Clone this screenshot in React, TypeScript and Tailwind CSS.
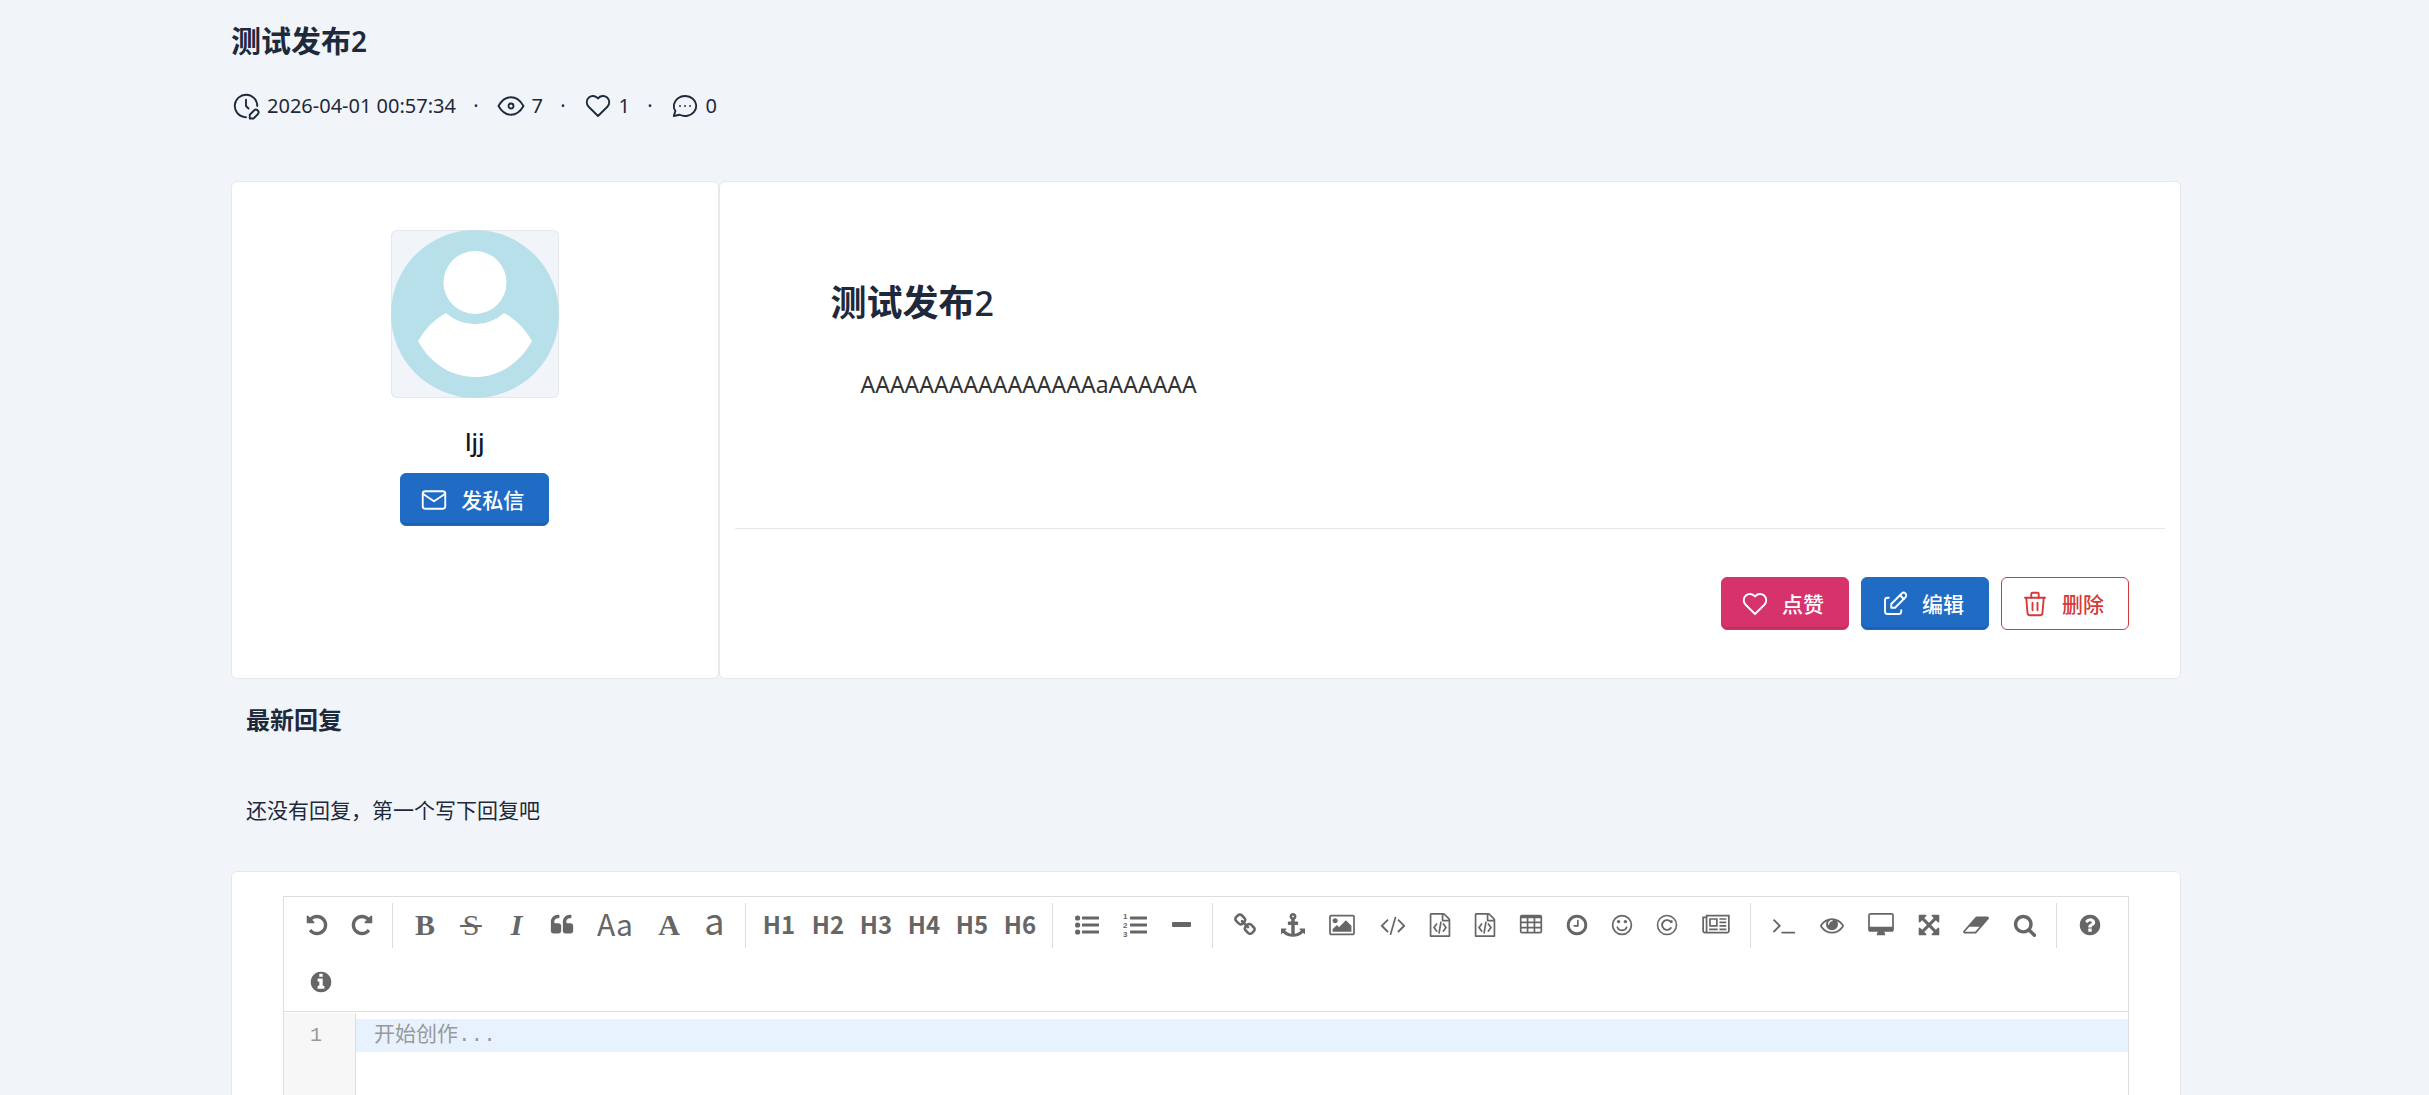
import type { ReactNode } from 'react'
import clsx from 'clsx'

const ICONS = {
  undo: 'M1664 896q0 156-61 298t-164 245-245 164-298 61q-172 0-327-72.5t-264-204.5q-7-10-6.5-22.5t8.5-20.5l137-138q10-9 25-9 16 2 23 12 73 95 179 147t225 52q104 0 198.5-40.5t163.5-109.5 109.5-163.5 40.5-198.5-40.5-198.5-109.5-163.5-163.5-109.5-198.5-40.5q-98 0-188 35.5t-160 101.5l137 138q31 30 14 69-17 40-59 40h-448q-26 0-45-19t-19-45v-448q0-42 40-59 39-17 69 14l130 129q107-101 244.5-156.5t284.5-55.5q156 0 298 61t245 164 164 245 61 298z',
  redo: 'M1664 256v448q0 26-19 45t-45 19h-448q-42 0-59-40-17-39 14-69l138-138q-148-137-349-137-104 0-198.5 40.5t-163.5 109.5-109.5 163.5-40.5 198.5 40.5 198.5 109.5 163.5 163.5 109.5 198.5 40.5q119 0 225-52t179-147q7-10 23-12 15 0 25 9l137 138q9 8 9.5 20.5t-7.5 22.5q-109 132-264 204.5t-327 72.5q-156 0-298-61t-245-164-164-245-61-298 61-298 164-245 245-164 298-61q147 0 284.5 55.5t244.5 156.5l130-129q29-31 70-14 39 17 39 59z',
  quote: 'M832 960v384q0 80-56 136t-136 56h-384q-80 0-136-56t-56-136v-704q0-104 40.5-198.5t109.5-163.5 163.5-109.5 198.5-40.5h64q26 0 45 19t19 45v128q0 26-19 45t-45 19h-64q-106 0-181 75t-75 181v32q0 40 28 68t68 28h224q80 0 136 56t56 136zm896 0v384q0 80-56 136t-136 56h-384q-80 0-136-56t-56-136v-704q0-104 40.5-198.5t109.5-163.5 163.5-109.5 198.5-40.5h64q26 0 45 19t19 45v128q0 26-19 45t-45 19h-64q-106 0-181 75t-75 181v32q0 40 28 68t68 28h224q80 0 136 56t56 136z',
  link: 'M1520 1216q0-40-28-68l-208-208q-28-28-68-28-42 0-72 32 3 3 19 18.5t21.5 21.5 15 19 13 25.5 3.5 27.5q0 40-28 68t-68 28q-15 0-27.5-3.5t-25.5-13-19-15-21.5-21.5-18.5-19q-33 31-33 73 0 40 28 68l206 207q27 27 68 27 40 0 68-26l147-146q28-28 28-67zm-703-705q0-40-28-68l-206-207q-28-28-68-28-39 0-68 27l-147 146q-28 28-28 67 0 40 28 68l208 208q27 27 68 27 42 0 72-31-3-3-19-18.5t-21.5-21.5-15-19-13-25.5-3.5-27.5q0-40 28-68t68-28q15 0 27.5 3.5t25.5 13 19 15 21.5 21.5 18.5 19q33-31 33-73zm895 705q0 120-85 203l-147 146q-83 83-203 83-121 0-204-85l-206-207q-83-83-83-203 0-123 88-209l-88-88q-86 88-208 88-120 0-204-84l-208-208q-84-84-84-204t85-203l147-146q83-83 203-83 121 0 204 85l206 207q83 83 83 203 0 123-88 209l88 88q86-88 208-88 120 0 204 84l208 208q84 84 84 204z',
  anchor: 'M960 256q0-26-19-45t-45-19-45 19-19 45 19 45 45 19 45-19 19-45zm832 928v352q0 22-20 30-8 2-12 2-13 0-23-9l-93-93q-119 143-318.5 226.5t-429.5 83.5-429.5-83.5-318.5-226.5l-93 93q-9 9-23 9-4 0-12-2-20-8-20-30v-352q0-14 9-23t23-9h352q22 0 30 20 8 19-7 35l-100 100q67 91 189.5 153.5t271.5 82.5v-647h-192q-26 0-45-19t-19-45v-128q0-26 19-45t45-19h192v-163q-58-34-93-92.5t-35-128.5q0-106 75-181t181-75 181 75 75 181q0 70-35 128.5t-93 92.5v163h192q26 0 45 19t19 45v128q0 26-19 45t-45 19h-192v647q149-20 271.5-82.5t189.5-153.5l-100-100q-15-16-7-35 8-20 30-20h352q14 0 23 9t9 23z',
  picture: 'M576 576q0 80-56 136t-136 56-136-56-56-136 56-136 136-56 136 56 56 136zm1024 384v448h-1408v-192l320-320 160 160 512-512zm96-704h-1600q-13 0-22.5 9.5t-9.5 22.5v1216q0 13 9.5 22.5t22.5 9.5h1600q13 0 22.5-9.5t9.5-22.5v-1216q0-13-9.5-22.5t-22.5-9.5zm160 32v1216q0 66-47 113t-113 47h-1600q-66 0-113-47t-47-113v-1216q0-66 47-113t113-47h1600q66 0 113 47t47 113z',
  code: 'M553 1399l-50 50q-10 10-23 10t-23-10l-466-466q-10-10-10-23t10-23l466-466q10-10 23-10t23 10l50 50q10 10 10 23t-10 23l-393 393 393 393q10 10 10 23t-10 23zm591-1067l-373 1291q-4 13-15.5 19.5t-23.5 2.5l-62-17q-13-4-19.5-15.5t-2.5-24.5l373-1291q4-13 15.5-19.5t23.5-2.5l62 17q13 4 19.5 15.5t2.5 24.5zm657 651l-466 466q-10 10-23 10t-23-10l-50-50q-10-10-10-23t10-23l393-393-393-393q-10-10-10-23t10-23l50-50q10-10 23-10t23 10l466 466q10 10 10 23t-10 23z',
  fileCode: 'M1596 380q28 28 48 76t20 88v1152q0 40-28 68t-68 28h-1344q-40 0-68-28t-28-68v-1600q0-40 28-68t68-28h896q40 0 88 20t76 48zm-444-244v376h376q-10-29-22-41l-313-313q-12-12-41-22zm384 1528v-1024h-416q-40 0-68-28t-28-68v-416h-768v1536h1280zm-928-896q8-11 21-12.5t24 6.5l51 38q11 8 12.5 21t-6.5 24l-182 243 182 243q8 11 6.5 24t-12.5 21l-51 38q-11 8-24 6.5t-21-12.5l-226-301q-14-19 0-38zm802 301q14 19 0 38l-226 301q-8 11-21 12.5t-24-6.5l-51-38q-11-8-12.5-21t6.5-24l182-243-182-243q-8-11-6.5-24t12.5-21l51-38q11-8 24-6.5t21 12.5zm-620 461q-13-2-20.5-13t-5.5-24l138-831q2-13 13-20.5t24-5.5l63 10q13 2 20.5 13t5.5 24l-138 831q-2 13-13 20.5t-24 5.5z',
  table: 'M224 128h1344q160 0 160 160v1088q0 160-160 160h-1344q-160 0-160-160v-1088q0-160 160-160zM192 384v256h384v-256zM704 384v256h384v-256zM1216 384v256h384v-256zM192 768v256h384v-256zM704 768v256h384v-256zM1216 768v256h384v-256zM192 1152v256h384v-256zM704 1152v256h384v-256zM1216 1152v256h384v-256z',
  clock: 'M1024 544v448q0 14-9 23t-23 9h-320q-14 0-23-9t-9-23v-64q0-14 9-23t23-9h224v-352q0-14 9-23t23-9h64q14 0 23 9t9 23zm416 352q0-148-73-273t-198-198-273-73-273 73-198 198-73 273 73 273 198 198 273 73 273-73 198-198 73-273zm224 0q0 209-103 385.5t-279.5 279.5-385.5 103-385.5-103-279.5-279.5-103-385.5 103-385.5 279.5-279.5 385.5-103 385.5 103 279.5 279.5 103 385.5z',
  news: 'M1024 512h-384v384h384v-384zm128 640v128h-640v-128h640zm0-768v640h-640v-640h640zm640 768v128h-512v-128h512zm0-256v128h-512v-128h512zm0-256v128h-512v-128h512zm0-256v128h-512v-128h512zm-1536 960v-960h-128v960q0 26 19 45t45 19 45-19 19-45zm1664 0v-1088h-1536v1088q0 33-11 64h1483q26 0 45-19t19-45zm128-1216v1216q0 80-56 136t-136 56h-1664q-80 0-136-56t-56-136v-1088h256v-128h1792z',
  terminal: 'M649 983l-466 466q-10 10-23 10t-23-10l-50-50q-10-10-10-23t10-23l393-393-393-393q-10-10-10-23t10-23l50-50q10-10 23-10t23 10l466 466q10 10 10 23t-10 23zm1079 457v64q0 14-9 23t-23 9h-960q-14 0-23-9t-9-23v-64q0-14 9-23t23-9h960q14 0 23 9t9 23z',
  eye: 'M1664 960q-152-236-381-353 61 104 61 225 0 185-131.5 316.5t-316.5 131.5-316.5-131.5-131.5-316.5q0-121 61-225-229 117-381 353 133 205 333.5 326.5t434.5 121.5 434.5-121.5 333.5-326.5zm-720-384q0-20-14-34t-34-14q-125 0-214.5 89.5t-89.5 214.5q0 20 14 34t34 14 34-14 14-34q0-86 61-147t147-61q20 0 34-14t14-34zm848 384q0 34-20 69-140 230-376.5 368.5t-499.5 138.5-499.5-139-376.5-368q-20-35-20-69t20-69q140-229 376.5-368t499.5-139 499.5 139 376.5 368q20 35 20 69z',
  desktop: 'M1728 992v-832q0-13-9.5-22.5t-22.5-9.5h-1600q-13 0-22.5 9.5t-9.5 22.5v832q0 13 9.5 22.5t22.5 9.5h1600q13 0 22.5-9.5t9.5-22.5zm128-832v1088q0 66-47 113t-113 47h-544q0 37 16 77.5t32 71 16 43.5q0 26-19 45t-45 19h-512q-26 0-45-19t-19-45q0-14 16-44t32-70 16-78h-544q-66 0-113-47t-47-113v-1088q0-66 47-113t113-47h1600q66 0 113 47t47 113z',
  arrows: 'M1411 541l-355 355 355 355 144-144q29-31 70-14 39 17 39 59v448q0 26-19 45t-45 19h-448q-42 0-59-40-17-39 14-69l144-144-355-355-355 355 144 144q31 30 14 69-17 40-59 40h-448q-26 0-45-19t-19-45v-448q0-42 40-59 39-17 69 14l144 144 355-355-355-355-144 144q-19 19-45 19-12 0-24-5-40-17-40-59v-448q0-26 19-45t45-19h448q42 0 59 40 17 39-14 69l-144 144 355 355 355-355-144-144q-31-30-14-69 17-40 59-40h448q26 0 45 19t19 45v448q0 42-39 59-13 5-25 5-26 0-45-19z',
  eraser: 'M832 1408l336-384h-768l-336 384h768zm1013-1077q15 34 9.5 71.5t-30.5 65.5l-896 1024q-38 44-96 44h-768q-38 0-69.5-20.5t-47.5-54.5q-15-34-9.5-71.5t30.5-65.5l896-1024q38-44 96-44h768q38 0 69.5 20.5t47.5 54.5z',
  search: 'M1216 832q0-185-131.5-316.5t-316.5-131.5-316.5 131.5-131.5 316.5 131.5 316.5 316.5 131.5 316.5-131.5 131.5-316.5zm512 832q0 52-38 90t-90 38q-54 0-90-38l-343-342q-179 124-399 124-143 0-273.5-55.5t-225-150-150-225-55.5-273.5 55.5-273.5 150-225 225-150 273.5-55.5 273.5 55.5 225 150 150 225 55.5 273.5q0 220-124 399l343 343q37 37 37 90z',
  question: 'M1024 1376v-192q0-14-9-23t-23-9h-192q-14 0-23 9t-9 23v192q0 14 9 23t23 9h192q14 0 23-9t9-23zm256-672q0-88-55.5-163t-138.5-116-170-41q-243 0-371 213-15 24 8 42l132 100q7 6 19 6 16 0 25-12 53-68 86-92 34-24 86-24 48 0 85.5 26t37.5 59q0 38-20 61t-68 45q-63 28-115.5 86.5t-52.5 125.5v36q0 14 9 23t23 9h192q14 0 23-9t9-23q0-19 21.5-49.5t54.5-49.5q32-18 49-28.5t46-35 44.5-48 28-60.5 12.5-81zm384 192q0 209-103 385.5t-279.5 279.5-385.5 103-385.5-103-279.5-279.5-103-385.5 103-385.5 279.5-279.5 385.5-103 385.5 103 279.5 279.5 103 385.5z',
  info: 'M1152 1376v-160q0-14-9-23t-23-9h-96v-512q0-14-9-23t-23-9h-320q-14 0-23 9t-9 23v160q0 14 9 23t23 9h96v320h-96q-14 0-23 9t-9 23v160q0 14 9 23t23 9h448q14 0 23-9t9-23zm-128-896v-160q0-14-9-23t-23-9h-192q-14 0-23 9t-9 23v160q0 14 9 23t23 9h192q14 0 23-9t9-23zm640 416q0 209-103 385.5t-279.5 279.5-385.5 103-385.5-103-279.5-279.5-103-385.5 103-385.5 279.5-279.5 385.5-103 385.5 103 279.5 279.5 103 385.5z',
}

function Glyph({ name, wide }: { name: keyof typeof ICONS; wide?: boolean }) {
  return (
    <svg
      viewBox={wide ? '-64 0 1920 1792' : '0 0 1792 1792'}
      className={wide ? 'h-6 w-[26px]' : 'size-6'}
      fill="currentColor"
      fillRule="evenodd"
    >
      <path d={ICONS[name]} />
    </svg>
  )
}

function ListIcon({ ordered }: { ordered?: boolean }) {
  return (
    <svg viewBox="0 0 24 24" className="size-6 overflow-visible" fill="currentColor">
      {[5, 12, 19].map((y, i) => (
        <g key={y}>
          <rect x="7" y={y - 1.5} width="17" height="3" rx="0.4" />
          {ordered ? (
            <text x="0" y={6 + i * 9} className="font-['Liberation_Sans'] text-[8px] font-bold">
              {i + 1}
            </text>
          ) : (
            <circle cx="2.6" cy={y} r="2.6" />
          )}
        </g>
      ))}
    </svg>
  )
}

function SmileIcon() {
  return (
    <svg viewBox="0 0 24 24" className="size-6" fill="none" stroke="currentColor" strokeWidth="1.7">
      <circle cx="12" cy="12" r="9.4" />
      <path d="M7.3 14.2c.8 2 2.5 3.2 4.7 3.2s3.9-1.2 4.7-3.2" strokeLinecap="round" />
      <circle cx="8.6" cy="8.6" r="1.7" fill="currentColor" stroke="none" />
      <circle cx="15.4" cy="8.6" r="1.7" fill="currentColor" stroke="none" />
    </svg>
  )
}

function CopyrightIcon() {
  return (
    <svg viewBox="0 0 24 24" className="size-6" fill="none" stroke="currentColor" strokeWidth="1.6">
      <circle cx="12" cy="12" r="9.5" />
      <path d="M16.300 9.600a4.900 4.900 0 1 0 0 4.800M16.600 7.300v2.600" strokeWidth="1.9" />
    </svg>
  )
}

const SERIF = "font-['Liberation_Serif',serif] text-[30px] leading-none"

type Tool = { title: string; w: string; icon: ReactNode }

const TOOLS: Tool[][] = [
  [
    { title: '撤销', w: 'w-[45px]', icon: <Glyph name="undo" /> },
    { title: '重做', w: 'w-[45px]', icon: <Glyph name="redo" /> },
  ],
  [
    { title: '粗体', w: 'w-12', icon: <span className={clsx(SERIF, 'font-bold')}>B</span> },
    { title: '删除线', w: 'w-11', icon: <s className={clsx(SERIF, 'decoration-2')}>&#8202;S&#8202;</s> },
    { title: '斜体', w: 'w-[47px]', icon: <em className={clsx(SERIF, 'font-bold')}>I</em> },
    { title: '引用', w: 'w-11', icon: <Glyph name="quote" /> },
    { title: '单词首字母转大写', w: 'w-[62px]', icon: <span className="pb-1 text-[30px] leading-none">Aa</span> },
    { title: '转换成大写', w: 'w-[46px]', icon: <span className={clsx(SERIF, 'font-bold')}>A</span> },
    { title: '转换成小写', w: 'w-[45px]', icon: <span className="pb-3 text-[36px] leading-none">a</span> },
  ],
  [1, 2, 3, 4, 5, 6].map((n) => ({
    title: `标题${n}`,
    w: n === 1 ? 'w-[50px]' : 'w-12',
    icon: <span className="pb-0.5 text-2xl leading-none font-bold">{`H${n}`}</span>,
  })),
  [
    { title: '无序列表', w: 'w-[51px]', icon: <ListIcon /> },
    { title: '有序列表', w: 'w-[46px]', icon: <ListIcon ordered /> },
    { title: '横线', w: 'w-[46px]', icon: <span className="h-[5px] w-[19px] rounded-[1px] bg-[#666]" /> },
  ],
  [
    { title: '链接', w: 'w-12', icon: <Glyph name="link" /> },
    { title: '引用链接', w: 'w-[47px]', icon: <Glyph name="anchor" /> },
    { title: '添加图片', w: 'w-[52px]', icon: <Glyph name="picture" wide /> },
    { title: '行内代码', w: 'w-[49px]', icon: <Glyph name="code" wide /> },
    { title: '预格式文本', w: 'w-[45px]', icon: <Glyph name="fileCode" /> },
    { title: '代码块', w: 'w-[45px]', icon: <Glyph name="fileCode" /> },
    { title: '添加表格', w: 'w-12', icon: <Glyph name="table" /> },
    { title: '日期时间', w: 'w-11', icon: <Glyph name="clock" /> },
    { title: 'Emoji表情', w: 'w-[45px]', icon: <SmileIcon /> },
    { title: 'HTML实体字符', w: 'w-[45px]', icon: <CopyrightIcon /> },
    {
      title: '插入分页符',
      w: 'w-[53px]',
      icon: (
        <svg viewBox="0 0 2048 1792" className="h-6 w-7" fill="currentColor" fillRule="evenodd">
          <path d={ICONS.news} />
        </svg>
      ),
    },
  ],
  [
    { title: '跳转到行', w: 'w-[50px]', icon: <Glyph name="terminal" /> },
    { title: '关闭实时预览', w: 'w-[46px]', icon: <Glyph name="eye" /> },
    { title: '全窗口预览HTML', w: 'w-[51px]', icon: <Glyph name="desktop" wide /> },
    { title: '全屏', w: 'w-[45px]', icon: <Glyph name="arrows" /> },
    { title: '清空', w: 'w-[50px]', icon: <Glyph name="eraser" wide /> },
    { title: '搜索', w: 'w-[47px]', icon: <Glyph name="search" /> },
  ],
  [
    { title: '使用帮助', w: 'w-[49px]', icon: <Glyph name="question" /> },
    { title: '关于', w: 'w-[53px]', icon: <Glyph name="info" /> },
  ],
]

const OUTLINE = {
  clockEdit: [
    'M21 12a9 9 0 1 0 -9.972 8.948c.32 .034 .644 .052 .972 .052',
    'M12 7v5l2 2',
    'M18.42 15.61a2.1 2.1 0 0 1 2.97 2.97l-3.39 3.42h-3v-3l3.42 -3.39z',
  ],
  eye: [
    'M10 12a2 2 0 1 0 4 0a2 2 0 1 0 -4 0',
    'M22 12c-2.667 4.667 -6 7 -10 7s-7.333 -2.333 -10 -7c2.667 -4.667 6 -7 10 -7s7.333 2.333 10 7',
  ],
  heart: ['M19.5 12.572l-7.5 7.428l-7.5 -7.428a5 5 0 1 1 7.5 -6.566a5 5 0 1 1 7.5 6.572'],
  message: [
    'M3 20l1.3 -3.9c-2.324 -3.437 -1.426 -7.872 2.1 -10.374c3.526 -2.501 8.59 -2.296 11.845 .48c3.255 2.777 3.695 7.266 1.029 10.501c-2.666 3.235 -7.615 4.215 -11.574 2.293l-4.7 1',
    'M12 12v.01',
    'M8 12v.01',
    'M16 12v.01',
  ],
  mail: [
    'M3 7a2 2 0 0 1 2 -2h14a2 2 0 0 1 2 2v10a2 2 0 0 1 -2 2h-14a2 2 0 0 1 -2 -2v-10z',
    'M3 7l9 6l9 -6',
  ],
  edit: [
    'M7 7h-1a2 2 0 0 0 -2 2v9a2 2 0 0 0 2 2h9a2 2 0 0 0 2 -2v-1',
    'M20.385 6.585a2.1 2.1 0 0 0 -2.97 -2.97l-8.415 8.385v3h3l8.385 -8.415z',
    'M16 5l3 3',
  ],
  trash: [
    'M4 7l16 0',
    'M10 11l0 6',
    'M14 11l0 6',
    'M5 7l1 12a2 2 0 0 0 2 2h8a2 2 0 0 0 2 -2l1 -12',
    'M9 7v-3a1 1 0 0 1 1 -1h4a1 1 0 0 1 1 1v3',
  ],
}

function Icon({ name }: { name: keyof typeof OUTLINE }) {
  return (
    <svg
      viewBox="0 0 24 24"
      className="size-[30px] shrink-0"
      fill="none"
      stroke="currentColor"
      strokeWidth="1.5"
      strokeLinecap="round"
      strokeLinejoin="round"
    >
      {OUTLINE[name].map((d) => (
        <path key={d} d={d} />
      ))}
    </svg>
  )
}

const BTN =
  'flex h-[53px] items-center gap-3 rounded-md border pr-6 pl-[18px] text-[21px] font-medium'

const META = 'flex items-center'

export default function App() {
  return (
    <div className="h-screen overflow-hidden bg-[#f1f5f9] pr-[17px] font-['Noto_Sans_CJK_SC',sans-serif] text-[21px] text-[#1e293b]">
      <div className="mx-auto max-w-[1950px]">
        <header className="pt-[19px]">
          <h2 className="flex items-baseline text-[30px] leading-10 font-bold">
            测试发布<span className="font-['Noto_Sans'] text-[28px] font-semibold">2</span>
          </h2>
          <div className="mt-[30px] flex h-[30px] items-center font-['Noto_Sans'] text-xl">
            <span className={clsx(META, 'gap-1.5')}>
              <Icon name="clockEdit" />
              2026-04-01 00:57:34
            </span>
            <span className="w-10 text-center">·</span>
            <span className={clsx(META, 'w-[47px] justify-between')}>
              <Icon name="eye" />7
            </span>
            <span className="w-10 text-center">·</span>
            <span className={clsx(META, 'w-[47px] justify-between')}>
              <Icon name="heart" />1
            </span>
            <span className="w-10 text-center">·</span>
            <span className={clsx(META, 'w-[47px] justify-between')}>
              <Icon name="message" />0
            </span>
          </div>
        </header>

        <div className="mt-[60px] flex">
          <aside className="flex w-1/4 flex-col items-center rounded-md border border-[#e6e7e9] bg-white pt-12">
            <div className="size-[168px] overflow-hidden rounded-md bg-[#f1f5f9] ring-1 ring-[#e6e7e9] ring-inset">
              <svg viewBox="0 0 168 168" className="size-full">
                <circle cx="84" cy="84" r="84" fill="#b8e0ea" />
                <circle cx="84" cy="52.5" r="31.5" fill="#fff" />
                <path
                  d="M55 83A43 43 0 0 0 113 83Q130 92 141 111C129 133 108 147 84 147S39 133 27 111Q38 92 55 83Z"
                  fill="#fff"
                />
              </svg>
            </div>
            <p className="mt-7 font-['Noto_Sans'] text-2xl leading-8 font-medium text-[#111827]">ljj</p>
            <button
              type="button"
              className={clsx(BTN, 'mt-[15px] border-[#206bc4] bg-[#206bc4] text-white shadow-[inset_0_-2px_0_#1d60b0]')}
            >
              <Icon name="mail" />
              发私信
            </button>
          </aside>

          <article className="w-3/4 rounded-md border border-[#e6e7e9] bg-white">
            <div className="mx-[15px] h-[347px] border-b border-[#e6e7e9] px-24 pt-[93px]">
              <h1 className="flex items-baseline text-4xl leading-[50px] font-bold">
                测试发布<span className="font-['Noto_Sans'] text-[34px] font-medium">2</span>
              </h1>
              <p className="mt-10 ml-[30px] font-['Noto_Sans'] text-[23px] leading-8 text-[#333]">
                AAAAAAAAAAAAAAAAaAAAAAA
              </p>
            </div>
            <div className="flex justify-end gap-3 pt-12 pr-[51px] pb-12">
              <button
                type="button"
                className={clsx(BTN, 'border-[#d6336c] bg-[#d6336c] text-white shadow-[inset_0_-2px_0_#c02e61]')}
              >
                <Icon name="heart" />
                点赞
              </button>
              <button
                type="button"
                className={clsx(BTN, 'border-[#206bc4] bg-[#206bc4] text-white shadow-[inset_0_-2px_0_#1d60b0]')}
              >
                <Icon name="edit" />
                编辑
              </button>
              <button type="button" className={clsx(BTN, 'border-[#d63939] bg-white text-[#d63939]')}>
                <Icon name="trash" />
                删除
              </button>
            </div>
          </article>
        </div>

        <section className="px-[15px] pb-0.5">
          <h3 className="mt-[22px] text-2xl leading-9 font-bold">最新回复</h3>
          <p className="mt-14 leading-8">还没有回复，第一个写下回复吧</p>
        </section>

        <section className="mt-11 h-[720px] rounded-md border border-[#e6e7e9] bg-white px-[51px] pt-6">
          <div className="h-full border border-[#ddd]">
            <div className="flex flex-wrap border-b border-[#ddd] pl-2.5 text-[#666]">
              {TOOLS.map((group, i) => (
                <div key={i} className="contents">
                  {i > 0 && <span className="mx-2 my-1.5 h-[45px] w-px bg-[#ddd]" />}
                  {group.map((tool) => (
                    <button
                      key={tool.title}
                      type="button"
                      aria-label={tool.title}
                      className={clsx('flex h-[57px] items-center justify-center pb-0.5', tool.w)}
                    >
                      {tool.icon}
                    </button>
                  ))}
                </div>
              ))}
            </div>
            <div className="flex h-[560px] pt-px">
              <div className="w-[72px] border-r border-[#ddd] bg-[#f7f7f7] pt-1.5 pr-[7px] text-center font-['Liberation_Mono',monospace] text-xl leading-[33px] text-[#999]">
                1
              </div>
              <textarea
                rows={1}
                aria-label="回复内容"
                placeholder="开始创作..."
                className="mt-1.5 block h-[33px] flex-1 resize-none overflow-hidden bg-[#e8f2ff] px-[18px] font-['Liberation_Mono','Noto_Sans_CJK_SC',monospace] text-[21px] leading-[33px] outline-none placeholder:text-[#999]"
              />
            </div>
          </div>
        </section>
      </div>
    </div>
  )
}
